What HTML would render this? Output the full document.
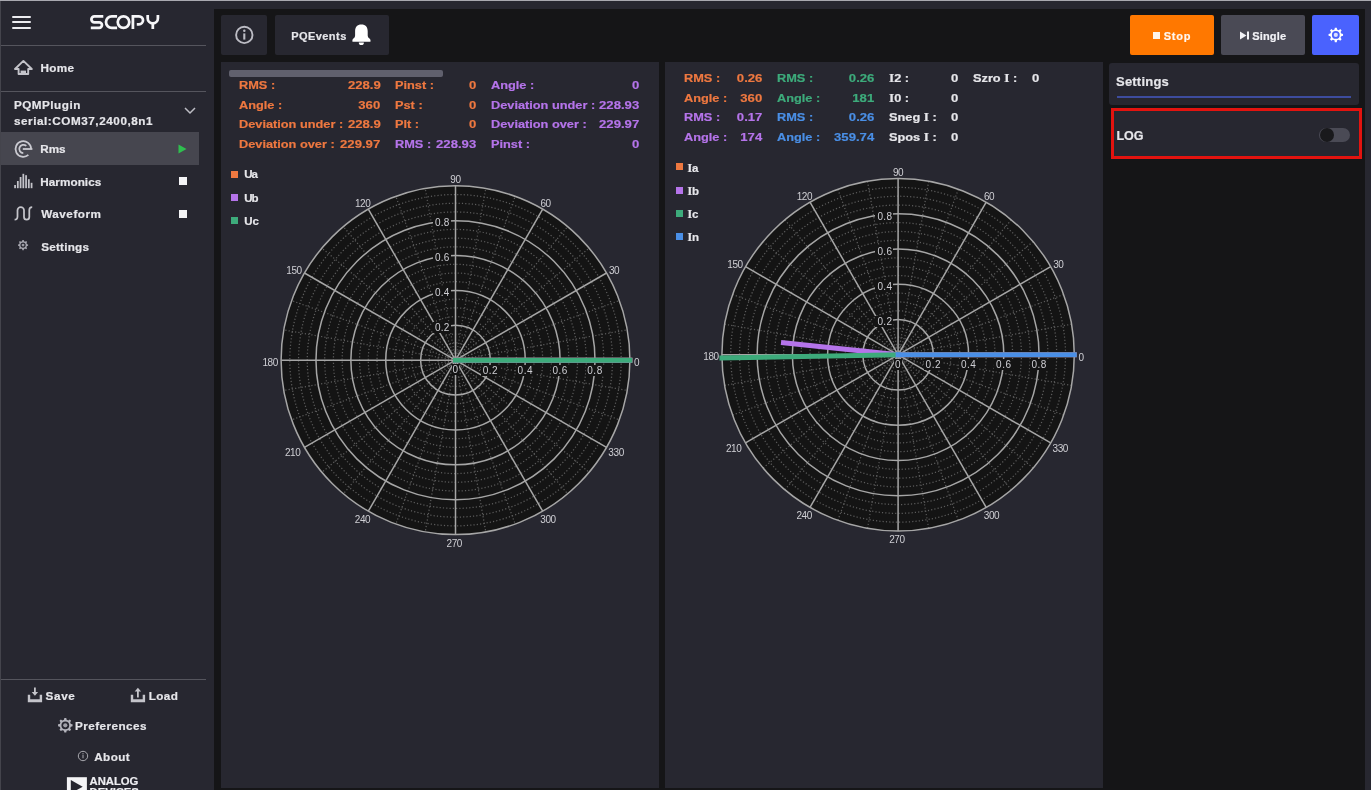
<!DOCTYPE html><html><head><meta charset="utf-8"><style>
html,body{margin:0;padding:0;}
body{width:1371px;height:790px;overflow:hidden;position:relative;background:#272730;font-family:"Liberation Sans", sans-serif;}
.a{position:absolute;}
#w{position:absolute;left:0;top:0;width:1371px;height:790px;will-change:transform;-webkit-text-stroke:0.2px currentColor;}
</style></head><body><div id="w">
<div class="a" style="left:0;top:0;width:1371px;height:1px;background:#a9a9b0"></div>
<div class="a" style="left:0;top:1px;width:1px;height:789px;background:#44444c"></div>
<div class="a" style="left:214px;top:9px;width:1151px;height:781px;background:#151517"></div>
<div class="a" style="left:12px;top:15.5px;width:19px;height:2px;border-radius:1px;background:#ececf0"></div>
<div class="a" style="left:12px;top:21px;width:19px;height:2px;border-radius:1px;background:#ececf0"></div>
<div class="a" style="left:12px;top:26.5px;width:19px;height:2px;border-radius:1px;background:#ececf0"></div>
<svg class="a" style="left:0;top:0" width="170" height="40" viewBox="0 0 170 40">
<g fill="none" stroke="#f6f6f8" stroke-width="2.75" stroke-linecap="butt">
<path d="M103.3 16.3 H94.4 A3 3 0 0 0 94.4 22.3 H99.2 A2.75 2.75 0 0 1 99.2 27.8 H90.8"/>
<path d="M117.1 16.3 H111.8 A5.8 5.8 0 0 0 111.8 27.9 H117.1"/>
<circle cx="123.5" cy="22.1" r="5.75"/>
<path d="M132.9 15.1 V29.1 M132.9 16.3 H139 A4 4 0 0 1 139 24.3 H136.8"/>
<path d="M147.7 15.1 V18.2 A5.1 5.1 0 0 0 157.9 18.2 V15.1 M152.8 23 V29.1"/>
</g></svg>
<div class="a" style="left:1px;top:45px;width:205px;height:1px;background:#55555d"></div>
<svg class="a" style="left:13px;top:58px" width="21" height="18" viewBox="0 0 21 18">
<path d="M5.6 11 H2 L10.4 2.9 L18.8 11 H15.2 V16 H5.6 Z" fill="none" stroke="#c4c4ca" stroke-width="1.9" stroke-linejoin="round"/>
<rect x="7.6" y="12.6" width="5.4" height="3.4" fill="#c4c4ca"/>
</svg>
<div style="position:absolute;left:40.50px;top:61px;font-size:11.7px;line-height:13.07px;font-weight:bold;color:#e6e6ea;white-space:pre;letter-spacing:0.333px;">Home</div>
<div class="a" style="left:1px;top:91px;width:205px;height:1px;background:#55555d"></div>
<div style="position:absolute;left:13.90px;top:98px;font-size:11.7px;line-height:13.07px;font-weight:bold;color:#e6e6ea;white-space:pre;letter-spacing:0.512px;">PQMPlugin</div>
<div style="position:absolute;left:13.90px;top:114px;font-size:11.7px;line-height:13.07px;font-weight:bold;color:#e6e6ea;white-space:pre;letter-spacing:0.565px;">serial:COM37,2400,8n1</div>
<svg class="a" style="left:183px;top:105px" width="14" height="11" viewBox="0 0 14 11">
<path d="M2 3 L7 8 L12 3" fill="none" stroke="#bdbdc4" stroke-width="1.5"/></svg>
<div class="a" style="left:1px;top:132px;width:198px;height:33px;background:#46464f"></div>
<svg class="a" style="left:0;top:130px" width="40" height="36" viewBox="0 130 40 36">
<g fill="none" stroke="#c9c9d0" stroke-width="1.8">
<path d="M31.1 149 A7.8 7.8 0 1 0 28.4 154.9"/>
<path d="M22.8 149 H32.4"/>
<path d="M26.3 145.9 A4.2 4.2 0 1 0 23.3 153.2"/>
</g></svg>
<div style="position:absolute;left:40.20px;top:142px;font-size:11.7px;line-height:13.07px;font-weight:bold;color:#e6e6ea;white-space:pre;letter-spacing:0.000px;">Rms</div>
<svg class="a" style="left:178px;top:144px" width="9" height="10" viewBox="0 0 9 10"><path d="M0.5 0.5 L8.5 5 L0.5 9.5 Z" fill="#2fbf4f"/></svg>
<svg class="a" style="left:0;top:160px" width="40" height="32" viewBox="0 160 40 32"><g fill="#c4c4ca"><rect x="14.20" y="185" width="1.75" height="3.2"/><rect x="16.95" y="181" width="1.75" height="7.2"/><rect x="19.70" y="177" width="1.75" height="11.2"/><rect x="22.45" y="173.8" width="1.75" height="14.4"/><rect x="25.20" y="175.2" width="1.75" height="13.0"/><rect x="27.95" y="179.2" width="1.75" height="9.0"/><rect x="30.70" y="182.8" width="1.75" height="5.4"/></g></svg>
<div style="position:absolute;left:40.20px;top:175px;font-size:11.7px;line-height:13.07px;font-weight:bold;color:#e6e6ea;white-space:pre;letter-spacing:0.088px;">Harmonics</div>
<div class="a" style="left:178.5px;top:177px;width:8px;height:8px;background:#f4f4f6"></div>
<svg class="a" style="left:13px;top:204px" width="21" height="20" viewBox="0 0 21 20">
<path d="M1.6 15.7 Q4.5 15.7 4.5 12.5 V6.3 A3.25 3.25 0 0 1 11 6.3 V12.9 A2.65 2.65 0 0 0 16.3 12.9 V6 Q16.3 3.05 19.2 3.05" fill="none" stroke="#c4c4ca" stroke-width="1.75"/></svg>
<div style="position:absolute;left:41.20px;top:207px;font-size:11.7px;line-height:13.07px;font-weight:bold;color:#e6e6ea;white-space:pre;letter-spacing:0.529px;">Waveform</div>
<div class="a" style="left:178.5px;top:209.5px;width:8px;height:8px;background:#f4f4f6"></div>
<svg class="a" style="left:16px;top:238px" width="14" height="14" viewBox="0 0 14 14"><path d="M6.37,2.05 L7.73,2.05 L7.98,3.21 L9.14,3.69 L10.14,3.05 L11.10,4.01 L10.46,5.01 L10.94,6.17 L12.10,6.42 L12.10,7.78 L10.94,8.03 L10.46,9.19 L11.10,10.19 L10.14,11.15 L9.14,10.51 L7.98,10.99 L7.73,12.15 L6.37,12.15 L6.12,10.99 L4.96,10.51 L3.96,11.15 L3.00,10.19 L3.64,9.19 L3.16,8.03 L2.00,7.78 L2.00,6.42 L3.16,6.17 L3.64,5.01 L3.00,4.01 L3.96,3.05 L4.96,3.69 L6.12,3.21 Z M9.65,7.10 A2.6,2.6 0 1 0 4.45,7.10 A2.6,2.6 0 1 0 9.65,7.10 Z" fill="#a9a9b2" fill-rule="evenodd"/><circle cx="7.05" cy="7.1" r="1.4" fill="#9a9aa2"/></svg>
<div style="position:absolute;left:41.20px;top:240px;font-size:11.7px;line-height:13.07px;font-weight:bold;color:#e6e6ea;white-space:pre;letter-spacing:0.243px;">Settings</div>
<div class="a" style="left:1px;top:679px;width:205px;height:1px;background:#55555d"></div>
<svg class="a" style="left:27px;top:686px" width="16" height="17" viewBox="0 0 16 17">
<path d="M0.8 8.8 H3.2 V13.2 H12.7 V8.8 H15.1 V16.2 H0.8 Z" fill="#c4c4ca"/>
<path d="M7.9 1.5 V7.5" stroke="#c4c4ca" stroke-width="1.8"/><path d="M4.7 6 H11.1 L7.9 9.7 Z" fill="#c4c4ca"/></svg>
<div style="position:absolute;left:45.60px;top:689px;font-size:11.7px;line-height:13.07px;font-weight:bold;color:#e6e6ea;white-space:pre;letter-spacing:0.633px;">Save</div>
<svg class="a" style="left:130px;top:686px" width="16" height="17" viewBox="0 0 16 17">
<path d="M0.8 8.8 H3.2 V13.2 H12.7 V8.8 H15.1 V16.2 H0.8 Z" fill="#c4c4ca"/>
<path d="M7.9 4.5 V11.5" stroke="#c4c4ca" stroke-width="1.8"/><path d="M4.7 5.5 H11.1 L7.9 1.8 Z" fill="#c4c4ca"/></svg>
<div style="position:absolute;left:148.70px;top:689px;font-size:11.7px;line-height:13.07px;font-weight:bold;color:#e6e6ea;white-space:pre;letter-spacing:0.433px;">Load</div>
<svg class="a" style="left:57px;top:717px" width="16" height="16" viewBox="0 0 16 16"><path d="M7.33,1.06 L9.27,1.06 L9.63,2.76 L11.28,3.44 L12.73,2.50 L14.10,3.87 L13.16,5.32 L13.84,6.97 L15.54,7.33 L15.54,9.27 L13.84,9.63 L13.16,11.28 L14.10,12.73 L12.73,14.10 L11.28,13.16 L9.63,13.84 L9.27,15.54 L7.33,15.54 L6.97,13.84 L5.32,13.16 L3.87,14.10 L2.50,12.73 L3.44,11.28 L2.76,9.63 L1.06,9.27 L1.06,7.33 L2.76,6.97 L3.44,5.32 L2.50,3.87 L3.87,2.50 L5.32,3.44 L6.97,2.76 Z M12.20,8.30 A3.9,3.9 0 1 0 4.40,8.30 A3.9,3.9 0 1 0 12.20,8.30 Z" fill="#b4b4bc" fill-rule="evenodd"/><circle cx="8.3" cy="8.3" r="2.1" fill="#a0a0a8"/></svg>
<div style="position:absolute;left:75.00px;top:719px;font-size:11.7px;line-height:13.07px;font-weight:bold;color:#e6e6ea;white-space:pre;letter-spacing:0.460px;">Preferences</div>
<svg class="a" style="left:77px;top:750px" width="12" height="12" viewBox="0 0 12 12">
<circle cx="6" cy="6" r="4.7" fill="none" stroke="#a8a8ae" stroke-width="1"/><path d="M6 4.6 V8.3" stroke="#a8a8ae" stroke-width="1"/><circle cx="6" cy="3.5" r="0.6" fill="#a8a8ae"/></svg>
<div style="position:absolute;left:94.20px;top:750px;font-size:11.7px;line-height:13.07px;font-weight:bold;color:#e6e6ea;white-space:pre;letter-spacing:0.450px;">About</div>
<svg class="a" style="left:66px;top:777px" width="22" height="13" viewBox="0 0 22 13">
<rect x="0.9" y="0.2" width="20" height="14" fill="#f4f4f6"/>
<path d="M4.8 3.1 L16.7 9.7 L4.8 16.3 Z" fill="#272730"/></svg>
<div class="a" style="left:89.6px;top:775.8px;font-size:11.3px;line-height:11px;font-weight:bold;color:#eeeef2;letter-spacing:-0.05px">ANALOG<br>DEVICES</div>
<div class="a" style="left:221px;top:15px;width:46px;height:40px;background:#272730;border-radius:2px"></div>
<svg class="a" style="left:234px;top:25px" width="21" height="21" viewBox="0 0 21 21">
<circle cx="10.3" cy="9.9" r="8.2" fill="none" stroke="#bcbcc4" stroke-width="1.9"/>
<path d="M10.3 8.4 V14.6" stroke="#bcbcc4" stroke-width="2.1"/><circle cx="10.3" cy="5.8" r="1.25" fill="#bcbcc4"/></svg>
<div class="a" style="left:275px;top:15px;width:114px;height:40px;background:#272730;border-radius:2px"></div>
<div style="position:absolute;left:291.20px;top:30px;font-size:11px;line-height:12.29px;font-weight:bold;color:#e6e6ea;white-space:pre;letter-spacing:0.443px;">PQEvents</div>
<svg class="a" style="left:351px;top:23px" width="21" height="23" viewBox="0 0 21 23">
<path d="M10.4 1.6 C14.6 1.6 16.7 4.2 16.7 8.2 V12.4 Q16.7 14.2 18.2 15.3 Q19.5 16.2 19.5 17.3 V18.2 Q19.5 18.7 19 18.7 H1.9 Q1.4 18.7 1.4 18.2 V17.3 Q1.4 16.2 2.7 15.3 Q4.1 14.2 4.1 12.4 V8.2 C4.1 4.2 6.2 1.6 10.4 1.6 Z" fill="#ffffff"/>
<path d="M7.8 19.5 H12.9 Q12.9 22.1 10.35 22.1 Q7.8 22.1 7.8 19.5 Z" fill="#ffffff"/></svg>
<div class="a" style="left:1130px;top:15px;width:84px;height:40px;background:#ff7800;border-radius:2px"></div>
<div class="a" style="left:1153px;top:32px;width:7px;height:7px;background:#fff4ea"></div>
<div style="position:absolute;left:1163.80px;top:30px;font-size:11px;line-height:12.29px;font-weight:bold;color:#fff6ee;white-space:pre;letter-spacing:0.733px;">Stop</div>
<div class="a" style="left:1221px;top:15px;width:84px;height:40px;background:#4a4a55;border-radius:2px"></div>
<svg class="a" style="left:1239px;top:31px" width="11" height="9" viewBox="0 0 11 9"><path d="M1 0.5 L7.5 4.5 L1 8.5 Z" fill="#f2f2f6"/><rect x="8" y="0.5" width="2" height="8" fill="#f2f2f6"/></svg>
<div style="position:absolute;left:1252.20px;top:30px;font-size:11px;line-height:12.29px;font-weight:bold;color:#f2f2f6;white-space:pre;letter-spacing:0.180px;">Single</div>
<div class="a" style="left:1312px;top:15px;width:47px;height:40px;background:#4a62fe;border-radius:2px"></div>
<svg class="a" style="left:1327px;top:26px" width="18" height="18" viewBox="0 0 18 18"><path d="M7.83,1.66 L9.77,1.66 L10.11,3.45 L11.73,4.13 L13.23,3.10 L14.60,4.47 L13.57,5.97 L14.25,7.59 L16.04,7.93 L16.04,9.87 L14.25,10.21 L13.57,11.83 L14.60,13.33 L13.23,14.70 L11.73,13.67 L10.11,14.35 L9.77,16.14 L7.83,16.14 L7.49,14.35 L5.87,13.67 L4.37,14.70 L3.00,13.33 L4.03,11.83 L3.35,10.21 L1.56,9.87 L1.56,7.93 L3.35,7.59 L4.03,5.97 L3.00,4.47 L4.37,3.10 L5.87,4.13 L7.49,3.45 Z M12.70,8.90 A3.9,3.9 0 1 0 4.90,8.90 A3.9,3.9 0 1 0 12.70,8.90 Z" fill="#ffffff" fill-rule="evenodd"/><circle cx="8.8" cy="8.9" r="2.1" fill="#dde0ff"/></svg>
<div class="a" style="left:221px;top:62px;width:438px;height:726px;background:#272730"></div>
<div class="a" style="left:665px;top:62px;width:438px;height:726px;background:#272730"></div>
<div class="a" style="left:229px;top:70px;width:214px;height:7px;background:#60606d;border-radius:2px"></div>
<div style="position:absolute;left:239px;top:79px;width:141.5px;font-size:11.5px;line-height:12.85px;font-weight:bold;color:#ee7840;white-space:pre;display:flex;justify-content:space-between"><span style="display:inline-block;transform:scaleX(1.109);transform-origin:0 50%">RMS :</span><span style="display:inline-block;transform:scaleX(1.14);transform-origin:100% 50%">228.9</span></div>
<div style="position:absolute;left:239px;top:99px;width:141.5px;font-size:11.5px;line-height:12.85px;font-weight:bold;color:#ee7840;white-space:pre;display:flex;justify-content:space-between"><span style="display:inline-block;transform:scaleX(1.109);transform-origin:0 50%">Angle :</span><span style="display:inline-block;transform:scaleX(1.14);transform-origin:100% 50%">360</span></div>
<div style="position:absolute;left:239px;top:118px;width:141.5px;font-size:11.5px;line-height:12.85px;font-weight:bold;color:#ee7840;white-space:pre;display:flex;justify-content:space-between"><span style="display:inline-block;transform:scaleX(1.109);transform-origin:0 50%">Deviation under :</span><span style="display:inline-block;transform:scaleX(1.14);transform-origin:100% 50%">228.9</span></div>
<div style="position:absolute;left:239px;top:138px;width:141.5px;font-size:11.5px;line-height:12.85px;font-weight:bold;color:#ee7840;white-space:pre;display:flex;justify-content:space-between"><span style="display:inline-block;transform:scaleX(1.109);transform-origin:0 50%">Deviation over :</span><span style="display:inline-block;transform:scaleX(1.14);transform-origin:100% 50%">229.97</span></div>
<div style="position:absolute;left:395px;top:79px;width:81px;font-size:11.5px;line-height:12.85px;font-weight:bold;color:#ee7840;white-space:pre;display:flex;justify-content:space-between"><span style="display:inline-block;transform:scaleX(1.109);transform-origin:0 50%">Pinst :</span><span style="display:inline-block;transform:scaleX(1.14);transform-origin:100% 50%">0</span></div>
<div style="position:absolute;left:395px;top:99px;width:81px;font-size:11.5px;line-height:12.85px;font-weight:bold;color:#ee7840;white-space:pre;display:flex;justify-content:space-between"><span style="display:inline-block;transform:scaleX(1.109);transform-origin:0 50%">Pst :</span><span style="display:inline-block;transform:scaleX(1.14);transform-origin:100% 50%">0</span></div>
<div style="position:absolute;left:395px;top:118px;width:81px;font-size:11.5px;line-height:12.85px;font-weight:bold;color:#ee7840;white-space:pre;display:flex;justify-content:space-between"><span style="display:inline-block;transform:scaleX(1.109);transform-origin:0 50%">Plt :</span><span style="display:inline-block;transform:scaleX(1.14);transform-origin:100% 50%">0</span></div>
<div style="position:absolute;left:395px;top:138px;width:81px;font-size:11.5px;line-height:12.85px;font-weight:bold;color:#b574ea;white-space:pre;display:flex;justify-content:space-between"><span style="display:inline-block;transform:scaleX(1.109);transform-origin:0 50%">RMS :</span><span style="display:inline-block;transform:scaleX(1.14);transform-origin:100% 50%">228.93</span></div>
<div style="position:absolute;left:491px;top:79px;width:148px;font-size:11.5px;line-height:12.85px;font-weight:bold;color:#b574ea;white-space:pre;display:flex;justify-content:space-between"><span style="display:inline-block;transform:scaleX(1.109);transform-origin:0 50%">Angle :</span><span style="display:inline-block;transform:scaleX(1.14);transform-origin:100% 50%">0</span></div>
<div style="position:absolute;left:491px;top:99px;width:148px;font-size:11.5px;line-height:12.85px;font-weight:bold;color:#b574ea;white-space:pre;display:flex;justify-content:space-between"><span style="display:inline-block;transform:scaleX(1.109);transform-origin:0 50%">Deviation under :</span><span style="display:inline-block;transform:scaleX(1.14);transform-origin:100% 50%">228.93</span></div>
<div style="position:absolute;left:491px;top:118px;width:148px;font-size:11.5px;line-height:12.85px;font-weight:bold;color:#b574ea;white-space:pre;display:flex;justify-content:space-between"><span style="display:inline-block;transform:scaleX(1.109);transform-origin:0 50%">Deviation over :</span><span style="display:inline-block;transform:scaleX(1.14);transform-origin:100% 50%">229.97</span></div>
<div style="position:absolute;left:491px;top:138px;width:148px;font-size:11.5px;line-height:12.85px;font-weight:bold;color:#b574ea;white-space:pre;display:flex;justify-content:space-between"><span style="display:inline-block;transform:scaleX(1.109);transform-origin:0 50%">Pinst :</span><span style="display:inline-block;transform:scaleX(1.14);transform-origin:100% 50%">0</span></div>
<div class="a" style="left:231px;top:170.5px;width:7px;height:7px;background:#ee7840"></div>
<div style="position:absolute;left:244.20px;top:168px;font-size:11.5px;line-height:12.85px;font-weight:bold;color:#e6e6ea;white-space:pre;letter-spacing:-0.900px;">Ua</div>
<div class="a" style="left:231px;top:193.8px;width:7px;height:7px;background:#b574ea"></div>
<div style="position:absolute;left:244.20px;top:192px;font-size:11.5px;line-height:12.85px;font-weight:bold;color:#e6e6ea;white-space:pre;letter-spacing:-0.900px;">Ub</div>
<div class="a" style="left:231px;top:217.1px;width:7px;height:7px;background:#3dab7b"></div>
<div style="position:absolute;left:244.20px;top:215px;font-size:11.5px;line-height:12.85px;font-weight:bold;color:#e6e6ea;white-space:pre;letter-spacing:0.100px;">Uc</div>
<div style="position:absolute;left:684px;top:72px;width:78.3px;font-size:11.5px;line-height:12.85px;font-weight:bold;color:#ee7840;white-space:pre;display:flex;justify-content:space-between"><span style="display:inline-block;transform:scaleX(1.109);transform-origin:0 50%">RMS :</span><span style="display:inline-block;transform:scaleX(1.14);transform-origin:100% 50%">0.26</span></div>
<div style="position:absolute;left:684px;top:92px;width:78.3px;font-size:11.5px;line-height:12.85px;font-weight:bold;color:#ee7840;white-space:pre;display:flex;justify-content:space-between"><span style="display:inline-block;transform:scaleX(1.109);transform-origin:0 50%">Angle :</span><span style="display:inline-block;transform:scaleX(1.14);transform-origin:100% 50%">360</span></div>
<div style="position:absolute;left:684px;top:111px;width:78.3px;font-size:11.5px;line-height:12.85px;font-weight:bold;color:#b574ea;white-space:pre;display:flex;justify-content:space-between"><span style="display:inline-block;transform:scaleX(1.109);transform-origin:0 50%">RMS :</span><span style="display:inline-block;transform:scaleX(1.14);transform-origin:100% 50%">0.17</span></div>
<div style="position:absolute;left:684px;top:131px;width:78.3px;font-size:11.5px;line-height:12.85px;font-weight:bold;color:#b574ea;white-space:pre;display:flex;justify-content:space-between"><span style="display:inline-block;transform:scaleX(1.109);transform-origin:0 50%">Angle :</span><span style="display:inline-block;transform:scaleX(1.14);transform-origin:100% 50%">174</span></div>
<div style="position:absolute;left:776.5px;top:72px;width:97.4px;font-size:11.5px;line-height:12.85px;font-weight:bold;color:#3dab7b;white-space:pre;display:flex;justify-content:space-between"><span style="display:inline-block;transform:scaleX(1.109);transform-origin:0 50%">RMS :</span><span style="display:inline-block;transform:scaleX(1.14);transform-origin:100% 50%">0.26</span></div>
<div style="position:absolute;left:776.5px;top:92px;width:97.4px;font-size:11.5px;line-height:12.85px;font-weight:bold;color:#3dab7b;white-space:pre;display:flex;justify-content:space-between"><span style="display:inline-block;transform:scaleX(1.109);transform-origin:0 50%">Angle :</span><span style="display:inline-block;transform:scaleX(1.14);transform-origin:100% 50%">181</span></div>
<div style="position:absolute;left:776.5px;top:111px;width:97.4px;font-size:11.5px;line-height:12.85px;font-weight:bold;color:#4a8fe6;white-space:pre;display:flex;justify-content:space-between"><span style="display:inline-block;transform:scaleX(1.109);transform-origin:0 50%">RMS :</span><span style="display:inline-block;transform:scaleX(1.14);transform-origin:100% 50%">0.26</span></div>
<div style="position:absolute;left:776.5px;top:131px;width:97.4px;font-size:11.5px;line-height:12.85px;font-weight:bold;color:#4a8fe6;white-space:pre;display:flex;justify-content:space-between"><span style="display:inline-block;transform:scaleX(1.109);transform-origin:0 50%">Angle :</span><span style="display:inline-block;transform:scaleX(1.14);transform-origin:100% 50%">359.74</span></div>
<div style="position:absolute;left:889px;top:72px;width:69.3px;font-size:11.5px;line-height:12.85px;font-weight:bold;color:#e6e6ea;white-space:pre;display:flex;justify-content:space-between"><span style="display:inline-block;transform:scaleX(1.109);transform-origin:0 50%"><span style="font-family:&quot;Liberation Serif&quot;,serif;font-size:12px">I</span>2 :</span><span style="display:inline-block;transform:scaleX(1.14);transform-origin:100% 50%">0</span></div>
<div style="position:absolute;left:889px;top:92px;width:69.3px;font-size:11.5px;line-height:12.85px;font-weight:bold;color:#e6e6ea;white-space:pre;display:flex;justify-content:space-between"><span style="display:inline-block;transform:scaleX(1.109);transform-origin:0 50%"><span style="font-family:&quot;Liberation Serif&quot;,serif;font-size:12px">I</span>0 :</span><span style="display:inline-block;transform:scaleX(1.14);transform-origin:100% 50%">0</span></div>
<div style="position:absolute;left:889px;top:111px;width:69.3px;font-size:11.5px;line-height:12.85px;font-weight:bold;color:#e6e6ea;white-space:pre;display:flex;justify-content:space-between"><span style="display:inline-block;transform:scaleX(1.109);transform-origin:0 50%">Sneg <span style="font-family:&quot;Liberation Serif&quot;,serif;font-size:12px">I</span> :</span><span style="display:inline-block;transform:scaleX(1.14);transform-origin:100% 50%">0</span></div>
<div style="position:absolute;left:889px;top:131px;width:69.3px;font-size:11.5px;line-height:12.85px;font-weight:bold;color:#e6e6ea;white-space:pre;display:flex;justify-content:space-between"><span style="display:inline-block;transform:scaleX(1.109);transform-origin:0 50%">Spos <span style="font-family:&quot;Liberation Serif&quot;,serif;font-size:12px">I</span> :</span><span style="display:inline-block;transform:scaleX(1.14);transform-origin:100% 50%">0</span></div>
<div style="position:absolute;left:973px;top:72px;width:66.7px;font-size:11.5px;line-height:12.85px;font-weight:bold;color:#e6e6ea;white-space:pre;display:flex;justify-content:space-between"><span style="display:inline-block;transform:scaleX(1.109);transform-origin:0 50%">Szro <span style="font-family:&quot;Liberation Serif&quot;,serif;font-size:12px">I</span> :</span><span style="display:inline-block;transform:scaleX(1.14);transform-origin:100% 50%">0</span></div>
<div class="a" style="left:675.5px;top:163.3px;width:7px;height:7px;background:#ee7840"></div>
<div class="a" style="left:687.5px;top:162px;font-size:11.5px;line-height:12.85px;font-weight:bold;color:#e6e6ea;white-space:pre"><span style="font-family:&quot;Liberation Serif&quot;,serif;font-size:12px">I</span><span style="margin-left:-0.3px">a</span></div>
<div class="a" style="left:675.5px;top:186.6px;width:7px;height:7px;background:#b574ea"></div>
<div class="a" style="left:687.5px;top:185px;font-size:11.5px;line-height:12.85px;font-weight:bold;color:#e6e6ea;white-space:pre"><span style="font-family:&quot;Liberation Serif&quot;,serif;font-size:12px">I</span><span style="margin-left:-0.3px">b</span></div>
<div class="a" style="left:675.5px;top:209.9px;width:7px;height:7px;background:#3dab7b"></div>
<div class="a" style="left:687.5px;top:208px;font-size:11.5px;line-height:12.85px;font-weight:bold;color:#e6e6ea;white-space:pre"><span style="font-family:&quot;Liberation Serif&quot;,serif;font-size:12px">I</span><span style="margin-left:-0.3px">c</span></div>
<div class="a" style="left:675.5px;top:233.2px;width:7px;height:7px;background:#4a8fe6"></div>
<div class="a" style="left:687.5px;top:231px;font-size:11.5px;line-height:12.85px;font-weight:bold;color:#e6e6ea;white-space:pre"><span style="font-family:&quot;Liberation Serif&quot;,serif;font-size:12px">I</span><span style="margin-left:-0.3px">n</span></div>
<svg class="a" style="left:0;top:0" width="1371" height="790" viewBox="0 0 1371 790"><circle cx="455.5" cy="360.2" r="174.4" fill="#141414"/>
<circle cx="455.5" cy="360.2" r="8.72" fill="none" stroke="#5c5c5c" stroke-width="1.25" stroke-dasharray="1.2 2.1"/>
<circle cx="455.5" cy="360.2" r="17.44" fill="none" stroke="#5c5c5c" stroke-width="1.25" stroke-dasharray="1.2 2.1"/>
<circle cx="455.5" cy="360.2" r="26.16" fill="none" stroke="#5c5c5c" stroke-width="1.25" stroke-dasharray="1.2 2.1"/>
<circle cx="455.5" cy="360.2" r="43.60" fill="none" stroke="#5c5c5c" stroke-width="1.25" stroke-dasharray="1.2 2.1"/>
<circle cx="455.5" cy="360.2" r="52.32" fill="none" stroke="#5c5c5c" stroke-width="1.25" stroke-dasharray="1.2 2.1"/>
<circle cx="455.5" cy="360.2" r="61.04" fill="none" stroke="#5c5c5c" stroke-width="1.25" stroke-dasharray="1.2 2.1"/>
<circle cx="455.5" cy="360.2" r="78.48" fill="none" stroke="#5c5c5c" stroke-width="1.25" stroke-dasharray="1.2 2.1"/>
<circle cx="455.5" cy="360.2" r="87.20" fill="none" stroke="#5c5c5c" stroke-width="1.25" stroke-dasharray="1.2 2.1"/>
<circle cx="455.5" cy="360.2" r="95.92" fill="none" stroke="#5c5c5c" stroke-width="1.25" stroke-dasharray="1.2 2.1"/>
<circle cx="455.5" cy="360.2" r="113.36" fill="none" stroke="#5c5c5c" stroke-width="1.25" stroke-dasharray="1.2 2.1"/>
<circle cx="455.5" cy="360.2" r="122.08" fill="none" stroke="#5c5c5c" stroke-width="1.25" stroke-dasharray="1.2 2.1"/>
<circle cx="455.5" cy="360.2" r="130.80" fill="none" stroke="#5c5c5c" stroke-width="1.25" stroke-dasharray="1.2 2.1"/>
<circle cx="455.5" cy="360.2" r="148.24" fill="none" stroke="#5c5c5c" stroke-width="1.25" stroke-dasharray="1.2 2.1"/>
<circle cx="455.5" cy="360.2" r="156.96" fill="none" stroke="#5c5c5c" stroke-width="1.25" stroke-dasharray="1.2 2.1"/>
<circle cx="455.5" cy="360.2" r="165.68" fill="none" stroke="#5c5c5c" stroke-width="1.25" stroke-dasharray="1.2 2.1"/>
<line x1="455.5" y1="360.2" x2="627.25" y2="329.92" stroke="#5c5c5c" stroke-width="1.25" stroke-dasharray="1.2 2.1"/>
<line x1="455.5" y1="360.2" x2="619.38" y2="300.55" stroke="#5c5c5c" stroke-width="1.25" stroke-dasharray="1.2 2.1"/>
<line x1="455.5" y1="360.2" x2="589.10" y2="248.10" stroke="#5c5c5c" stroke-width="1.25" stroke-dasharray="1.2 2.1"/>
<line x1="455.5" y1="360.2" x2="567.60" y2="226.60" stroke="#5c5c5c" stroke-width="1.25" stroke-dasharray="1.2 2.1"/>
<line x1="455.5" y1="360.2" x2="515.15" y2="196.32" stroke="#5c5c5c" stroke-width="1.25" stroke-dasharray="1.2 2.1"/>
<line x1="455.5" y1="360.2" x2="485.78" y2="188.45" stroke="#5c5c5c" stroke-width="1.25" stroke-dasharray="1.2 2.1"/>
<line x1="455.5" y1="360.2" x2="425.22" y2="188.45" stroke="#5c5c5c" stroke-width="1.25" stroke-dasharray="1.2 2.1"/>
<line x1="455.5" y1="360.2" x2="395.85" y2="196.32" stroke="#5c5c5c" stroke-width="1.25" stroke-dasharray="1.2 2.1"/>
<line x1="455.5" y1="360.2" x2="343.40" y2="226.60" stroke="#5c5c5c" stroke-width="1.25" stroke-dasharray="1.2 2.1"/>
<line x1="455.5" y1="360.2" x2="321.90" y2="248.10" stroke="#5c5c5c" stroke-width="1.25" stroke-dasharray="1.2 2.1"/>
<line x1="455.5" y1="360.2" x2="291.62" y2="300.55" stroke="#5c5c5c" stroke-width="1.25" stroke-dasharray="1.2 2.1"/>
<line x1="455.5" y1="360.2" x2="283.75" y2="329.92" stroke="#5c5c5c" stroke-width="1.25" stroke-dasharray="1.2 2.1"/>
<line x1="455.5" y1="360.2" x2="283.75" y2="390.48" stroke="#5c5c5c" stroke-width="1.25" stroke-dasharray="1.2 2.1"/>
<line x1="455.5" y1="360.2" x2="291.62" y2="419.85" stroke="#5c5c5c" stroke-width="1.25" stroke-dasharray="1.2 2.1"/>
<line x1="455.5" y1="360.2" x2="321.90" y2="472.30" stroke="#5c5c5c" stroke-width="1.25" stroke-dasharray="1.2 2.1"/>
<line x1="455.5" y1="360.2" x2="343.40" y2="493.80" stroke="#5c5c5c" stroke-width="1.25" stroke-dasharray="1.2 2.1"/>
<line x1="455.5" y1="360.2" x2="395.85" y2="524.08" stroke="#5c5c5c" stroke-width="1.25" stroke-dasharray="1.2 2.1"/>
<line x1="455.5" y1="360.2" x2="425.22" y2="531.95" stroke="#5c5c5c" stroke-width="1.25" stroke-dasharray="1.2 2.1"/>
<line x1="455.5" y1="360.2" x2="485.78" y2="531.95" stroke="#5c5c5c" stroke-width="1.25" stroke-dasharray="1.2 2.1"/>
<line x1="455.5" y1="360.2" x2="515.15" y2="524.08" stroke="#5c5c5c" stroke-width="1.25" stroke-dasharray="1.2 2.1"/>
<line x1="455.5" y1="360.2" x2="567.60" y2="493.80" stroke="#5c5c5c" stroke-width="1.25" stroke-dasharray="1.2 2.1"/>
<line x1="455.5" y1="360.2" x2="589.10" y2="472.30" stroke="#5c5c5c" stroke-width="1.25" stroke-dasharray="1.2 2.1"/>
<line x1="455.5" y1="360.2" x2="619.38" y2="419.85" stroke="#5c5c5c" stroke-width="1.25" stroke-dasharray="1.2 2.1"/>
<line x1="455.5" y1="360.2" x2="627.25" y2="390.48" stroke="#5c5c5c" stroke-width="1.25" stroke-dasharray="1.2 2.1"/>
<circle cx="455.5" cy="360.2" r="34.88" fill="none" stroke="#a6a6a6" stroke-width="1.5"/>
<circle cx="455.5" cy="360.2" r="69.76" fill="none" stroke="#a6a6a6" stroke-width="1.5"/>
<circle cx="455.5" cy="360.2" r="104.64" fill="none" stroke="#a6a6a6" stroke-width="1.5"/>
<circle cx="455.5" cy="360.2" r="139.52" fill="none" stroke="#a6a6a6" stroke-width="1.5"/>
<circle cx="455.5" cy="360.2" r="174.40" fill="none" stroke="#a6a6a6" stroke-width="1.5"/>
<line x1="455.5" y1="360.2" x2="629.90" y2="360.20" stroke="#a6a6a6" stroke-width="1.5"/>
<line x1="455.5" y1="360.2" x2="606.53" y2="273.00" stroke="#a6a6a6" stroke-width="1.5"/>
<line x1="455.5" y1="360.2" x2="542.70" y2="209.17" stroke="#a6a6a6" stroke-width="1.5"/>
<line x1="455.5" y1="360.2" x2="455.50" y2="185.80" stroke="#a6a6a6" stroke-width="1.5"/>
<line x1="455.5" y1="360.2" x2="368.30" y2="209.17" stroke="#a6a6a6" stroke-width="1.5"/>
<line x1="455.5" y1="360.2" x2="304.47" y2="273.00" stroke="#a6a6a6" stroke-width="1.5"/>
<line x1="455.5" y1="360.2" x2="281.10" y2="360.20" stroke="#a6a6a6" stroke-width="1.5"/>
<line x1="455.5" y1="360.2" x2="304.47" y2="447.40" stroke="#a6a6a6" stroke-width="1.5"/>
<line x1="455.5" y1="360.2" x2="368.30" y2="511.23" stroke="#a6a6a6" stroke-width="1.5"/>
<line x1="455.5" y1="360.2" x2="455.50" y2="534.60" stroke="#a6a6a6" stroke-width="1.5"/>
<line x1="455.5" y1="360.2" x2="542.70" y2="511.23" stroke="#a6a6a6" stroke-width="1.5"/>
<line x1="455.5" y1="360.2" x2="606.53" y2="447.40" stroke="#a6a6a6" stroke-width="1.5"/>
<line x1="455.5" y1="360.2" x2="629.90" y2="360.20" stroke="#ee7840" stroke-width="5" stroke-linecap="square"/>
<line x1="455.5" y1="360.2" x2="629.90" y2="360.20" stroke="#b574ea" stroke-width="5" stroke-linecap="square"/>
<line x1="455.5" y1="360.2" x2="629.90" y2="360.20" stroke="#3dab7b" stroke-width="5" stroke-linecap="square"/><circle cx="898.1" cy="354.8" r="176.2" fill="#141414"/>
<circle cx="898.1" cy="354.8" r="8.81" fill="none" stroke="#5c5c5c" stroke-width="1.25" stroke-dasharray="1.2 2.1"/>
<circle cx="898.1" cy="354.8" r="17.62" fill="none" stroke="#5c5c5c" stroke-width="1.25" stroke-dasharray="1.2 2.1"/>
<circle cx="898.1" cy="354.8" r="26.43" fill="none" stroke="#5c5c5c" stroke-width="1.25" stroke-dasharray="1.2 2.1"/>
<circle cx="898.1" cy="354.8" r="44.05" fill="none" stroke="#5c5c5c" stroke-width="1.25" stroke-dasharray="1.2 2.1"/>
<circle cx="898.1" cy="354.8" r="52.86" fill="none" stroke="#5c5c5c" stroke-width="1.25" stroke-dasharray="1.2 2.1"/>
<circle cx="898.1" cy="354.8" r="61.67" fill="none" stroke="#5c5c5c" stroke-width="1.25" stroke-dasharray="1.2 2.1"/>
<circle cx="898.1" cy="354.8" r="79.29" fill="none" stroke="#5c5c5c" stroke-width="1.25" stroke-dasharray="1.2 2.1"/>
<circle cx="898.1" cy="354.8" r="88.10" fill="none" stroke="#5c5c5c" stroke-width="1.25" stroke-dasharray="1.2 2.1"/>
<circle cx="898.1" cy="354.8" r="96.91" fill="none" stroke="#5c5c5c" stroke-width="1.25" stroke-dasharray="1.2 2.1"/>
<circle cx="898.1" cy="354.8" r="114.53" fill="none" stroke="#5c5c5c" stroke-width="1.25" stroke-dasharray="1.2 2.1"/>
<circle cx="898.1" cy="354.8" r="123.34" fill="none" stroke="#5c5c5c" stroke-width="1.25" stroke-dasharray="1.2 2.1"/>
<circle cx="898.1" cy="354.8" r="132.15" fill="none" stroke="#5c5c5c" stroke-width="1.25" stroke-dasharray="1.2 2.1"/>
<circle cx="898.1" cy="354.8" r="149.77" fill="none" stroke="#5c5c5c" stroke-width="1.25" stroke-dasharray="1.2 2.1"/>
<circle cx="898.1" cy="354.8" r="158.58" fill="none" stroke="#5c5c5c" stroke-width="1.25" stroke-dasharray="1.2 2.1"/>
<circle cx="898.1" cy="354.8" r="167.39" fill="none" stroke="#5c5c5c" stroke-width="1.25" stroke-dasharray="1.2 2.1"/>
<line x1="898.1" y1="354.8" x2="1071.62" y2="324.20" stroke="#5c5c5c" stroke-width="1.25" stroke-dasharray="1.2 2.1"/>
<line x1="898.1" y1="354.8" x2="1063.67" y2="294.54" stroke="#5c5c5c" stroke-width="1.25" stroke-dasharray="1.2 2.1"/>
<line x1="898.1" y1="354.8" x2="1033.08" y2="241.54" stroke="#5c5c5c" stroke-width="1.25" stroke-dasharray="1.2 2.1"/>
<line x1="898.1" y1="354.8" x2="1011.36" y2="219.82" stroke="#5c5c5c" stroke-width="1.25" stroke-dasharray="1.2 2.1"/>
<line x1="898.1" y1="354.8" x2="958.36" y2="189.23" stroke="#5c5c5c" stroke-width="1.25" stroke-dasharray="1.2 2.1"/>
<line x1="898.1" y1="354.8" x2="928.70" y2="181.28" stroke="#5c5c5c" stroke-width="1.25" stroke-dasharray="1.2 2.1"/>
<line x1="898.1" y1="354.8" x2="867.50" y2="181.28" stroke="#5c5c5c" stroke-width="1.25" stroke-dasharray="1.2 2.1"/>
<line x1="898.1" y1="354.8" x2="837.84" y2="189.23" stroke="#5c5c5c" stroke-width="1.25" stroke-dasharray="1.2 2.1"/>
<line x1="898.1" y1="354.8" x2="784.84" y2="219.82" stroke="#5c5c5c" stroke-width="1.25" stroke-dasharray="1.2 2.1"/>
<line x1="898.1" y1="354.8" x2="763.12" y2="241.54" stroke="#5c5c5c" stroke-width="1.25" stroke-dasharray="1.2 2.1"/>
<line x1="898.1" y1="354.8" x2="732.53" y2="294.54" stroke="#5c5c5c" stroke-width="1.25" stroke-dasharray="1.2 2.1"/>
<line x1="898.1" y1="354.8" x2="724.58" y2="324.20" stroke="#5c5c5c" stroke-width="1.25" stroke-dasharray="1.2 2.1"/>
<line x1="898.1" y1="354.8" x2="724.58" y2="385.40" stroke="#5c5c5c" stroke-width="1.25" stroke-dasharray="1.2 2.1"/>
<line x1="898.1" y1="354.8" x2="732.53" y2="415.06" stroke="#5c5c5c" stroke-width="1.25" stroke-dasharray="1.2 2.1"/>
<line x1="898.1" y1="354.8" x2="763.12" y2="468.06" stroke="#5c5c5c" stroke-width="1.25" stroke-dasharray="1.2 2.1"/>
<line x1="898.1" y1="354.8" x2="784.84" y2="489.78" stroke="#5c5c5c" stroke-width="1.25" stroke-dasharray="1.2 2.1"/>
<line x1="898.1" y1="354.8" x2="837.84" y2="520.37" stroke="#5c5c5c" stroke-width="1.25" stroke-dasharray="1.2 2.1"/>
<line x1="898.1" y1="354.8" x2="867.50" y2="528.32" stroke="#5c5c5c" stroke-width="1.25" stroke-dasharray="1.2 2.1"/>
<line x1="898.1" y1="354.8" x2="928.70" y2="528.32" stroke="#5c5c5c" stroke-width="1.25" stroke-dasharray="1.2 2.1"/>
<line x1="898.1" y1="354.8" x2="958.36" y2="520.37" stroke="#5c5c5c" stroke-width="1.25" stroke-dasharray="1.2 2.1"/>
<line x1="898.1" y1="354.8" x2="1011.36" y2="489.78" stroke="#5c5c5c" stroke-width="1.25" stroke-dasharray="1.2 2.1"/>
<line x1="898.1" y1="354.8" x2="1033.08" y2="468.06" stroke="#5c5c5c" stroke-width="1.25" stroke-dasharray="1.2 2.1"/>
<line x1="898.1" y1="354.8" x2="1063.67" y2="415.06" stroke="#5c5c5c" stroke-width="1.25" stroke-dasharray="1.2 2.1"/>
<line x1="898.1" y1="354.8" x2="1071.62" y2="385.40" stroke="#5c5c5c" stroke-width="1.25" stroke-dasharray="1.2 2.1"/>
<circle cx="898.1" cy="354.8" r="35.24" fill="none" stroke="#a6a6a6" stroke-width="1.5"/>
<circle cx="898.1" cy="354.8" r="70.48" fill="none" stroke="#a6a6a6" stroke-width="1.5"/>
<circle cx="898.1" cy="354.8" r="105.72" fill="none" stroke="#a6a6a6" stroke-width="1.5"/>
<circle cx="898.1" cy="354.8" r="140.96" fill="none" stroke="#a6a6a6" stroke-width="1.5"/>
<circle cx="898.1" cy="354.8" r="176.20" fill="none" stroke="#a6a6a6" stroke-width="1.5"/>
<line x1="898.1" y1="354.8" x2="1074.30" y2="354.80" stroke="#a6a6a6" stroke-width="1.5"/>
<line x1="898.1" y1="354.8" x2="1050.69" y2="266.70" stroke="#a6a6a6" stroke-width="1.5"/>
<line x1="898.1" y1="354.8" x2="986.20" y2="202.21" stroke="#a6a6a6" stroke-width="1.5"/>
<line x1="898.1" y1="354.8" x2="898.10" y2="178.60" stroke="#a6a6a6" stroke-width="1.5"/>
<line x1="898.1" y1="354.8" x2="810.00" y2="202.21" stroke="#a6a6a6" stroke-width="1.5"/>
<line x1="898.1" y1="354.8" x2="745.51" y2="266.70" stroke="#a6a6a6" stroke-width="1.5"/>
<line x1="898.1" y1="354.8" x2="721.90" y2="354.80" stroke="#a6a6a6" stroke-width="1.5"/>
<line x1="898.1" y1="354.8" x2="745.51" y2="442.90" stroke="#a6a6a6" stroke-width="1.5"/>
<line x1="898.1" y1="354.8" x2="810.00" y2="507.39" stroke="#a6a6a6" stroke-width="1.5"/>
<line x1="898.1" y1="354.8" x2="898.10" y2="531.00" stroke="#a6a6a6" stroke-width="1.5"/>
<line x1="898.1" y1="354.8" x2="986.20" y2="507.39" stroke="#a6a6a6" stroke-width="1.5"/>
<line x1="898.1" y1="354.8" x2="1050.69" y2="442.90" stroke="#a6a6a6" stroke-width="1.5"/>
<line x1="898.1" y1="354.8" x2="1074.30" y2="354.80" stroke="#ee7840" stroke-width="5" stroke-linecap="square"/>
<line x1="898.1" y1="354.8" x2="783.50" y2="342.75" stroke="#b574ea" stroke-width="5" stroke-linecap="square"/>
<line x1="898.1" y1="354.8" x2="721.93" y2="357.88" stroke="#3dab7b" stroke-width="5" stroke-linecap="square"/>
<line x1="898.1" y1="354.8" x2="1074.30" y2="354.80" stroke="#4a8fe6" stroke-width="5" stroke-linecap="square"/></svg>
<div style="position:absolute;font-size:10px;line-height:11px;color:#cfcfd4;white-space:nowrap;-webkit-text-stroke:0;left:432.7px;top:322.0px;width:17px;text-align:right;background:#141414;padding-right:1px;letter-spacing:0.3px">0.2</div>
<div style="position:absolute;font-size:10px;line-height:11px;color:#cfcfd4;white-space:nowrap;-webkit-text-stroke:0;left:432.7px;top:287.1px;width:17px;text-align:right;background:#141414;padding-right:1px;letter-spacing:0.3px">0.4</div>
<div style="position:absolute;font-size:10px;line-height:11px;color:#cfcfd4;white-space:nowrap;-webkit-text-stroke:0;left:432.7px;top:252.3px;width:17px;text-align:right;background:#141414;padding-right:1px;letter-spacing:0.3px">0.6</div>
<div style="position:absolute;font-size:10px;line-height:11px;color:#cfcfd4;white-space:nowrap;-webkit-text-stroke:0;left:432.7px;top:217.4px;width:17px;text-align:right;background:#141414;padding-right:1px;letter-spacing:0.3px">0.8</div>
<div style="position:absolute;font-size:10px;line-height:11px;color:#cfcfd4;white-space:nowrap;-webkit-text-stroke:0;left:451.5px;top:364.2px;background:#141414;padding:0 1px">0</div>
<div style="position:absolute;font-size:10px;line-height:11px;color:#cfcfd4;white-space:nowrap;-webkit-text-stroke:0;left:480.9px;top:364.7px;width:19px;text-align:center;background:#141414;letter-spacing:0.5px">0.2</div>
<div style="position:absolute;font-size:10px;line-height:11px;color:#cfcfd4;white-space:nowrap;-webkit-text-stroke:0;left:515.8px;top:364.7px;width:19px;text-align:center;background:#141414;letter-spacing:0.5px">0.4</div>
<div style="position:absolute;font-size:10px;line-height:11px;color:#cfcfd4;white-space:nowrap;-webkit-text-stroke:0;left:550.6px;top:364.7px;width:19px;text-align:center;background:#141414;letter-spacing:0.5px">0.6</div>
<div style="position:absolute;font-size:10px;line-height:11px;color:#cfcfd4;white-space:nowrap;-webkit-text-stroke:0;left:585.5px;top:364.7px;width:19px;text-align:center;background:#141414;letter-spacing:0.5px">0.8</div>
<div style="position:absolute;font-size:10px;line-height:11px;color:#cfcfd4;white-space:nowrap;-webkit-text-stroke:0;left:633.7px;top:356.9px;width:6px;text-align:center;letter-spacing:-0.4px">0</div>
<div style="position:absolute;font-size:10px;line-height:11px;color:#cfcfd4;white-space:nowrap;-webkit-text-stroke:0;left:608.1px;top:265.0px;width:12px;text-align:center;letter-spacing:-0.4px">30</div>
<div style="position:absolute;font-size:10px;line-height:11px;color:#cfcfd4;white-space:nowrap;-webkit-text-stroke:0;left:539.6px;top:198.1px;width:12px;text-align:center;letter-spacing:-0.4px">60</div>
<div style="position:absolute;font-size:10px;line-height:11px;color:#cfcfd4;white-space:nowrap;-webkit-text-stroke:0;left:449.5px;top:173.7px;width:12px;text-align:center;letter-spacing:-0.4px">90</div>
<div style="position:absolute;font-size:10px;line-height:11px;color:#cfcfd4;white-space:nowrap;-webkit-text-stroke:0;left:353.7px;top:198.4px;width:18px;text-align:center;letter-spacing:-0.4px">120</div>
<div style="position:absolute;font-size:10px;line-height:11px;color:#cfcfd4;white-space:nowrap;-webkit-text-stroke:0;left:285.0px;top:265.0px;width:18px;text-align:center;letter-spacing:-0.4px">150</div>
<div style="position:absolute;font-size:10px;line-height:11px;color:#cfcfd4;white-space:nowrap;-webkit-text-stroke:0;left:261.2px;top:356.5px;width:18px;text-align:center;letter-spacing:-0.4px">180</div>
<div style="position:absolute;font-size:10px;line-height:11px;color:#cfcfd4;white-space:nowrap;-webkit-text-stroke:0;left:283.7px;top:447.1px;width:18px;text-align:center;letter-spacing:-0.4px">210</div>
<div style="position:absolute;font-size:10px;line-height:11px;color:#cfcfd4;white-space:nowrap;-webkit-text-stroke:0;left:353.5px;top:514.0px;width:18px;text-align:center;letter-spacing:-0.4px">240</div>
<div style="position:absolute;font-size:10px;line-height:11px;color:#cfcfd4;white-space:nowrap;-webkit-text-stroke:0;left:445.3px;top:537.7px;width:18px;text-align:center;letter-spacing:-0.4px">270</div>
<div style="position:absolute;font-size:10px;line-height:11px;color:#cfcfd4;white-space:nowrap;-webkit-text-stroke:0;left:539.0px;top:514.0px;width:18px;text-align:center;letter-spacing:-0.4px">300</div>
<div style="position:absolute;font-size:10px;line-height:11px;color:#cfcfd4;white-space:nowrap;-webkit-text-stroke:0;left:607.1px;top:447.1px;width:18px;text-align:center;letter-spacing:-0.4px">330</div>
<div style="position:absolute;font-size:10px;line-height:11px;color:#cfcfd4;white-space:nowrap;-webkit-text-stroke:0;left:875.3px;top:316.3px;width:17px;text-align:right;background:#141414;padding-right:1px;letter-spacing:0.3px">0.2</div>
<div style="position:absolute;font-size:10px;line-height:11px;color:#cfcfd4;white-space:nowrap;-webkit-text-stroke:0;left:875.3px;top:281.0px;width:17px;text-align:right;background:#141414;padding-right:1px;letter-spacing:0.3px">0.4</div>
<div style="position:absolute;font-size:10px;line-height:11px;color:#cfcfd4;white-space:nowrap;-webkit-text-stroke:0;left:875.3px;top:245.8px;width:17px;text-align:right;background:#141414;padding-right:1px;letter-spacing:0.3px">0.6</div>
<div style="position:absolute;font-size:10px;line-height:11px;color:#cfcfd4;white-space:nowrap;-webkit-text-stroke:0;left:875.3px;top:210.5px;width:17px;text-align:right;background:#141414;padding-right:1px;letter-spacing:0.3px">0.8</div>
<div style="position:absolute;font-size:10px;line-height:11px;color:#cfcfd4;white-space:nowrap;-webkit-text-stroke:0;left:894.1px;top:358.8px;background:#141414;padding:0 1px">0</div>
<div style="position:absolute;font-size:10px;line-height:11px;color:#cfcfd4;white-space:nowrap;-webkit-text-stroke:0;left:923.8px;top:359.3px;width:19px;text-align:center;background:#141414;letter-spacing:0.5px">0.2</div>
<div style="position:absolute;font-size:10px;line-height:11px;color:#cfcfd4;white-space:nowrap;-webkit-text-stroke:0;left:959.1px;top:359.3px;width:19px;text-align:center;background:#141414;letter-spacing:0.5px">0.4</div>
<div style="position:absolute;font-size:10px;line-height:11px;color:#cfcfd4;white-space:nowrap;-webkit-text-stroke:0;left:994.3px;top:359.3px;width:19px;text-align:center;background:#141414;letter-spacing:0.5px">0.6</div>
<div style="position:absolute;font-size:10px;line-height:11px;color:#cfcfd4;white-space:nowrap;-webkit-text-stroke:0;left:1029.6px;top:359.3px;width:19px;text-align:center;background:#141414;letter-spacing:0.5px">0.8</div>
<div style="position:absolute;font-size:10px;line-height:11px;color:#cfcfd4;white-space:nowrap;-webkit-text-stroke:0;left:1078.1px;top:351.5px;width:6px;text-align:center;letter-spacing:-0.4px">0</div>
<div style="position:absolute;font-size:10px;line-height:11px;color:#cfcfd4;white-space:nowrap;-webkit-text-stroke:0;left:1052.3px;top:258.7px;width:12px;text-align:center;letter-spacing:-0.4px">30</div>
<div style="position:absolute;font-size:10px;line-height:11px;color:#cfcfd4;white-space:nowrap;-webkit-text-stroke:0;left:983.1px;top:191.1px;width:12px;text-align:center;letter-spacing:-0.4px">60</div>
<div style="position:absolute;font-size:10px;line-height:11px;color:#cfcfd4;white-space:nowrap;-webkit-text-stroke:0;left:892.1px;top:166.5px;width:12px;text-align:center;letter-spacing:-0.4px">90</div>
<div style="position:absolute;font-size:10px;line-height:11px;color:#cfcfd4;white-space:nowrap;-webkit-text-stroke:0;left:795.4px;top:191.4px;width:18px;text-align:center;letter-spacing:-0.4px">120</div>
<div style="position:absolute;font-size:10px;line-height:11px;color:#cfcfd4;white-space:nowrap;-webkit-text-stroke:0;left:726.0px;top:258.7px;width:18px;text-align:center;letter-spacing:-0.4px">150</div>
<div style="position:absolute;font-size:10px;line-height:11px;color:#cfcfd4;white-space:nowrap;-webkit-text-stroke:0;left:702.0px;top:351.1px;width:18px;text-align:center;letter-spacing:-0.4px">180</div>
<div style="position:absolute;font-size:10px;line-height:11px;color:#cfcfd4;white-space:nowrap;-webkit-text-stroke:0;left:724.7px;top:442.6px;width:18px;text-align:center;letter-spacing:-0.4px">210</div>
<div style="position:absolute;font-size:10px;line-height:11px;color:#cfcfd4;white-space:nowrap;-webkit-text-stroke:0;left:795.2px;top:510.2px;width:18px;text-align:center;letter-spacing:-0.4px">240</div>
<div style="position:absolute;font-size:10px;line-height:11px;color:#cfcfd4;white-space:nowrap;-webkit-text-stroke:0;left:887.9px;top:534.1px;width:18px;text-align:center;letter-spacing:-0.4px">270</div>
<div style="position:absolute;font-size:10px;line-height:11px;color:#cfcfd4;white-space:nowrap;-webkit-text-stroke:0;left:982.5px;top:510.2px;width:18px;text-align:center;letter-spacing:-0.4px">300</div>
<div style="position:absolute;font-size:10px;line-height:11px;color:#cfcfd4;white-space:nowrap;-webkit-text-stroke:0;left:1051.3px;top:442.6px;width:18px;text-align:center;letter-spacing:-0.4px">330</div>
<div class="a" style="left:1109px;top:63px;width:250px;height:42px;background:#272730;border-radius:3px"></div>
<div style="position:absolute;left:1116.00px;top:75px;font-size:13px;line-height:14.52px;font-weight:bold;color:#e6e6ea;white-space:pre;letter-spacing:0.214px;">Settings</div>
<div class="a" style="left:1117px;top:96px;width:234px;height:2px;background:#3d4c9e"></div>
<div class="a" style="left:1111px;top:108px;width:245px;height:45px;border:3px solid #e3130f;background:#272730"></div>
<div style="position:absolute;left:1116.50px;top:130px;font-size:12.5px;line-height:13.96px;font-weight:bold;color:#e6e6ea;white-space:pre;letter-spacing:-0.100px;">LOG</div>
<div class="a" style="left:1319px;top:128px;width:31px;height:14px;border-radius:7px;background:#4a4a55"></div>
<div class="a" style="left:1319.5px;top:128px;width:14px;height:14px;border-radius:7px;background:#19191c"></div>
</div></body></html>
